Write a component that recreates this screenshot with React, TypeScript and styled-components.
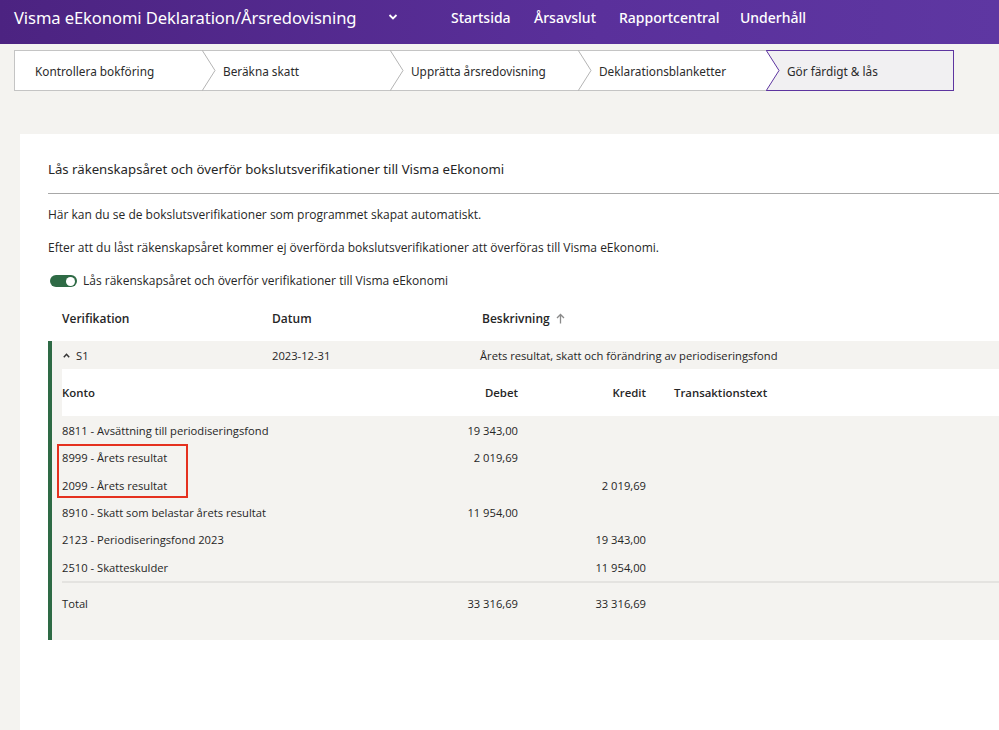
import React from "react";
import styled, { createGlobalStyle } from "styled-components";

const GlobalStyle = createGlobalStyle`
  html, body { margin: 0; padding: 0; }
  body {
    background: #f4f3f0;
    font-family: "Open Sans", "Noto Sans", sans-serif;
    color: #262626;
    overflow: hidden;
  }
  * { box-sizing: border-box; }
`;

const Page = styled.div`
  width: 999px;
  height: 730px;
  display: flex;
  flex-direction: column;
`;

const Header = styled.header`
  height: 44px;
  display: flex;
  align-items: center;
  padding-left: 14px;
  background: linear-gradient(90deg, #4c2381 0%, #5a309b 60%, #5e37a2 100%);
  color: #fff;
  font-family: "Noto Sans", "Open Sans", sans-serif;
`;

const AppTitle = styled.div`
  font-size: 16.6px;
  letter-spacing: -0.1px;
  width: 374px;
  padding-bottom: 10px;
`;

const MenuChevron = styled.svg`
  width: 10px;
  height: 8px;
  margin-right: 53px;
  margin-bottom: 10px;
`;

const Nav = styled.nav`
  display: flex;
  padding-bottom: 10px;
`;

const NavItem = styled.a<{ $w: number }>`
  width: ${(p) => p.$w}px;
  font-size: 14px;
  color: #fff;
  text-decoration: none;
  font-weight: 500;
`;

const Stepper = styled.ol`
  list-style: none;
  margin: 6px 0 0 14px;
  padding: 0;
  display: grid;
  grid-template-columns: repeat(5, 188px);
  height: 41px;
`;

const Step = styled.li<{ $active?: boolean; $first?: boolean }>`
  display: flex;
  align-items: center;
  height: 41px;
  background: ${(p) => (p.$active ? "#f1f0f2" : "#fff")};
  border-top: 1px solid ${(p) => (p.$active ? "#5d35a0" : "#c4c4c4")};
  border-bottom: 1px solid ${(p) => (p.$active ? "#5d35a0" : "#c4c4c4")};
  border-left: ${(p) => (p.$first ? "1px solid #c4c4c4" : "none")};
  border-right: ${(p) => (p.$active ? "1px solid #5d35a0" : "none")};
  padding-left: ${(p) => (p.$first ? "20px" : "0")};
  font-family: "Noto Sans", "Open Sans", sans-serif;
  font-size: 11.8px;
  color: #2b2b2b;
`;

const StepArrow = styled.svg`
  width: 14px;
  height: 41px;
  margin: -1px 7px -1px 0;
  flex: none;
`;

const Card = styled.section`
  margin: 43px 0 0 20px;
  flex: 1;
  background: #fff;
  padding: 25px 0 0 28px;
`;

const CardTitle = styled.h2`
  margin: 0;
  font-family: "Noto Sans", "Open Sans", sans-serif;
  font-weight: 400;
  font-size: 13.2px;
  line-height: 20px;
  padding-bottom: 14px;
  border-bottom: 1px solid #a8a8a8;
`;

const Para = styled.p<{ $mt: number }>`
  margin: 0;
  font-size: 12px;
  line-height: 18px;
  margin-top: ${(p) => p.$mt}px;
`;

const ToggleRow = styled.label`
  display: flex;
  align-items: center;
  gap: 6px;
  margin: 15px 0 0 2px;
  font-size: 12px;
  line-height: 18px;
`;

const Toggle = styled.span`
  width: 27px;
  height: 12px;
  border-radius: 6px;
  background: #2e6a45;
  position: relative;
  flex: none;
`;

const Knob = styled.span`
  position: absolute;
  right: 2px;
  top: 1.5px;
  width: 9px;
  height: 9px;
  border-radius: 50%;
  background: #fff;
`;

const HeadRow = styled.div`
  display: grid;
  grid-template-columns: 210px 210px 1fr;
  padding: 0 0 0 14px;
  height: 46px;
  align-items: center;
  margin-top: 5px;
  font-weight: 600;
  font-size: 12px;
`;

const SortArrow = styled.svg`
  width: 9px;
  height: 11px;
  margin-left: 6px;
  vertical-align: -1px;
`;

const Group = styled.div`
  border-left: 4px solid #2e6a45;
  background: #f4f3f0;
  padding-bottom: 15px;
`;

const GroupRow = styled.div`
  display: grid;
  grid-template-columns: 210px 208px 1fr;
  padding-left: 10px;
  height: 28px;
  align-items: center;
  font-size: 11.2px;
`;

const Caret = styled.svg`
  width: 7px;
  height: 5px;
  margin: 0 6px 2px 1px;
`;

const SubTable = styled.div`
  margin-left: 10px;
`;

const SubGrid = styled.div<{ $head?: boolean; $h: number }>`
  display: grid;
  grid-template-columns: 376px 80px 128px 1fr;
  align-items: center;
  height: ${(p) => p.$h}px;
  background: ${(p) => (p.$head ? "#fff" : "transparent")};
  font-weight: ${(p) => (p.$head ? 600 : 400)};
  font-size: ${(p) => (p.$head ? 11.4 : 11.2)}px;
`;

const Cell = styled.span<{ $right?: boolean; $pl?: number }>`
  text-align: ${(p) => (p.$right ? "right" : "left")};
  padding-left: ${(p) => p.$pl ?? 0}px;
  white-space: nowrap;
`;

const Rows = styled.div`
  position: relative;
  padding-top: 1px;
`;

const Highlight = styled.div`
  position: absolute;
  left: -5px;
  top: 28px;
  width: 131px;
  height: 54px;
  border: 2px solid #e5311f;
`;

const Divider = styled.hr`
  margin: 0;
  border: none;
  border-top: 2px solid #e4e3e0;
`;

const steps = [
  "Kontrollera bokföring",
  "Beräkna skatt",
  "Upprätta årsredovisning",
  "Deklarationsblanketter",
  "Gör färdigt & lås",
];

const rows: [string, string, string][] = [
  ["8811 - Avsättning till periodiseringsfond", "19 343,00", ""],
  ["8999 - Årets resultat", "2 019,69", ""],
  ["2099 - Årets resultat", "", "2 019,69"],
  ["8910 - Skatt som belastar årets resultat", "11 954,00", ""],
  ["2123 - Periodiseringsfond 2023", "", "19 343,00"],
  ["2510 - Skatteskulder", "", "11 954,00"],
];

export default function App() {
  return (
    <Page>
      <GlobalStyle />
      <Header>
        <AppTitle>Visma eEkonomi Deklaration/Årsredovisning</AppTitle>
        <MenuChevron viewBox="0 0 10 8">
          <path d="M1.5 2 L5 5.5 L8.5 2" fill="none" stroke="#fff" strokeWidth="1.8" />
        </MenuChevron>
        <Nav>
          <NavItem $w={83}>Startsida</NavItem>
          <NavItem $w={85}>Årsavslut</NavItem>
          <NavItem $w={121}>Rapportcentral</NavItem>
          <NavItem $w={80}>Underhåll</NavItem>
        </Nav>
      </Header>

      <Stepper>
        {steps.map((s, i) => {
          const active = i === steps.length - 1;
          return (
            <Step key={s} $active={active} $first={i === 0}>
              {i > 0 && (
                <StepArrow viewBox="0 0 14 41" preserveAspectRatio="none">
                  <polygon points="0,0 13,20.5 0,41" fill="#fff" />
                  <polyline
                    points="0,0 13,20.5 0,41"
                    fill="none"
                    stroke={active ? "#5d35a0" : "#b4b4b4"}
                    strokeWidth="1"
                  />
                </StepArrow>
              )}
              {s}
            </Step>
          );
        })}
      </Stepper>

      <Card>
        <CardTitle>Lås räkenskapsåret och överför bokslutsverifikationer till Visma eEkonomi</CardTitle>
        <Para $mt={12}>Här kan du se de bokslutsverifikationer som programmet skapat automatiskt.</Para>
        <Para $mt={15}>Efter att du låst räkenskapsåret kommer ej överförda bokslutsverifikationer att överföras till Visma eEkonomi.</Para>
        <ToggleRow>
          <Toggle>
            <Knob />
          </Toggle>
          Lås räkenskapsåret och överför verifikationer till Visma eEkonomi
        </ToggleRow>

        <HeadRow>
          <span>Verifikation</span>
          <span>Datum</span>
          <span>
            Beskrivning
            <SortArrow viewBox="0 0 9 11">
              <path d="M4.5 10.5 V1.5 M1 5 L4.5 1.5 L8 5" fill="none" stroke="#8a8a8a" strokeWidth="1.3" />
            </SortArrow>
          </span>
        </HeadRow>

        <Group>
          <GroupRow>
            <span>
              <Caret viewBox="0 0 7 5">
                <path d="M0.8 4.2 L3.5 1.3 L6.2 4.2" fill="none" stroke="#333" strokeWidth="1.5" />
              </Caret>
              S1
            </span>
            <span>2023-12-31</span>
            <span>Årets resultat, skatt och förändring av periodiseringsfond</span>
          </GroupRow>
          <SubTable>
            <SubGrid $head $h={47}>
              <Cell>Konto</Cell>
              <Cell $right>Debet</Cell>
              <Cell $right>Kredit</Cell>
              <Cell $pl={28}>Transaktionstext</Cell>
            </SubGrid>
            <Rows>
              {rows.map(([k, d, c]) => (
                <SubGrid key={k} $h={27.3}>
                  <Cell>{k}</Cell>
                  <Cell $right>{d}</Cell>
                  <Cell $right>{c}</Cell>
                  <Cell />
                </SubGrid>
              ))}
              <Highlight />
            </Rows>
            <Divider />
            <SubGrid $h={42}>
              <Cell>Total</Cell>
              <Cell $right>33 316,69</Cell>
              <Cell $right>33 316,69</Cell>
              <Cell />
            </SubGrid>
          </SubTable>
        </Group>
      </Card>
    </Page>
  );
}
